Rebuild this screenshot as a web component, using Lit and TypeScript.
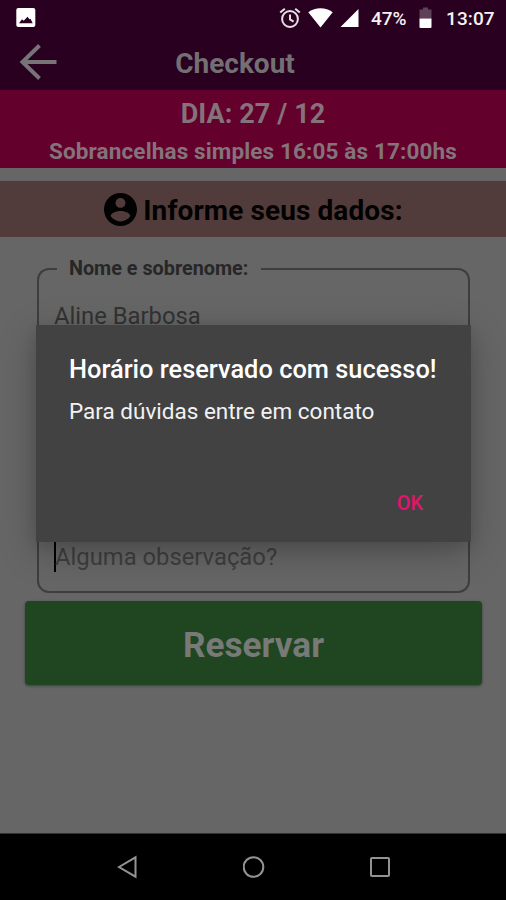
import { LitElement, html, css } from "lit";
import { customElement } from "lit/decorators.js";

@customElement("app-root")
export class AppRoot extends LitElement {
  static styles = css`
    :host {
      display: block;
      position: relative;
      width: 506px;
      height: 900px;
      overflow: hidden;
      background: #666666;
      font-family: Roboto, "Liberation Sans", sans-serif;
      line-height: 1;
      white-space: nowrap;
    }
    * { box-sizing: border-box; }
    svg { display: block; flex: none; }
    .screen { display: flex; flex-direction: column; height: 900px; }
    .status {
      height: 36px;
      background: #2a0020;
      color: #f4f2f4;
      display: flex;
      align-items: center;
      padding: 0 11px 0 15px;
      font-size: 19px;
      font-weight: 500;
    }
    .spacer { flex: 1; }
    .alarm { margin-right: 7px; }
    .wifi { margin-right: 7px; }
    .signal { margin-right: 12px; }
    .percent { width: 38px; margin-right: 10px; }
    .battery { margin-right: 14px; }
    .clock { width: 49px; letter-spacing: 0.1px; }
    .bar {
      height: 54px;
      background: #2a0020;
      color: #737073;
      display: grid;
      grid-template-columns: 60px 1fr 96px;
      align-items: center;
      font-size: 28px;
      font-weight: 700;
    }
    .bar svg { margin-left: 19px; margin-top: -2px; }
    .bar span { text-align: center; padding-top: 2px; }
    .day {
      height: 78px;
      background: #64002c;
      color: #84737b;
      display: flex;
      flex-direction: column;
      align-items: center;
      padding-top: 11px;
      font-weight: 700;
      gap: 12px;
    }
    .date { font-size: 27px; letter-spacing: 0.1px; }
    .service { font-size: 22.5px; letter-spacing: 0.13px; }
    .section {
      margin-top: 13px;
      height: 56px;
      background: #523c3b;
      color: #020202;
      display: flex;
      align-items: center;
      justify-content: center;
      gap: 6px;
      padding: 4px 0 0 1px;
      font-size: 28px;
      letter-spacing: 0.1px;
      font-weight: 700;
    }
    .section svg { margin-top: -4px; }
    .field {
      margin: 22px 36px 0 37px;
      height: 334px;
      display: flex;
      flex-direction: column;
    }
    .legend {
      display: flex;
      align-items: flex-start;
      height: 46px;
      color: #272727;
      font-size: 19.8px;
      font-weight: 700;
    }
    .edge { height: 37px; margin-top: 9px; border: 0 solid #3e3e3e; }
    .left { width: 20px; border-width: 2px 0 0 2px; border-top-left-radius: 12px; }
    .right { flex: 1; border-width: 2px 2px 0 0; border-top-right-radius: 12px; }
    .legend span { width: 204px; padding-left: 12px; }
    .body {
      flex: 1;
      border: 2px solid #3e3e3e;
      border-top: 0;
      border-radius: 0 0 12px 12px;
      display: flex;
      flex-direction: column;
      justify-content: space-between;
      padding: 0 15px 19px;
      font-size: 23.8px;
    }
    .name { color: #323232; }
    .note { color: #3e3e3e; display: flex; align-items: center; height: 30px; }
    .note span { padding-top: 2px; }
    .caret { width: 2px; height: 30px; background: #000; margin-right: -1px; }
    .reserve {
      margin: 8px 24px 0 25px;
      height: 84px;
      border-radius: 4px;
      background: #1f4621;
      box-shadow: 0 1px 3px rgba(0, 0, 0, 0.4);
      color: #777a77;
      display: flex;
      align-items: center;
      justify-content: center;
      padding-top: 6px;
      font-size: 35.2px;
      font-weight: 700;
    }
    .nav {
      margin-top: auto;
      height: 67px;
      background: #000;
      border-top: 1px solid #333;
      display: flex;
      align-items: center;
      justify-content: space-between;
      padding: 0 115px 0 116px;
    }
    .dialog {
      position: absolute;
      left: 36px;
      top: 325px;
      width: 435px;
      height: 217px;
      background: #424242;
      box-shadow: 0 10px 34px rgba(0, 0, 0, 0.26), 0 4px 12px rgba(0, 0, 0, 0.08);
      padding: 32px 34px 28px 33px;
      display: flex;
      flex-direction: column;
    }
    .title { color: #fff; font-size: 25.4px; font-weight: 500; }
    .message { color: #f2f2f2; font-size: 22.5px; margin-top: 18px; }
    .ok { color: #e3146c; font-size: 19.8px; font-weight: 500; margin-top: auto; align-self: flex-end; margin-right: 14px; }
  `;

  render() {
    return html`
      <div class="screen">
        <div class="status">
          <svg width="22" height="22" viewBox="0 0 22 22">
            <rect x="1.3" y="1" width="19" height="19" rx="2" fill="#fff" />
            <path d="M4 16.300l3-4 1.700 1.500 3.800-4 2 2.500 1-.5 2.200 4.500z" fill="#2a0020" />
          </svg>
          <div class="spacer"></div>
          <svg class="alarm" width="22" height="22" viewBox="0 0 22 22" fill="none" stroke="#e6e0e5" stroke-width="2">
            <circle cx="11" cy="12" r="7.9" />
            <path d="M1.2 5.6L5.8 1.7M16.2 1.7l4.6 3.9M11 7.5V12.4l3.6 2.2" />
          </svg>
          <svg class="wifi" width="25" height="22" viewBox="0 0 25 22">
            <path d="M0.3 5.2C7 -0.2 18 -0.2 24.7 5.2L12.5 20.6z" fill="#fff" />
          </svg>
          <svg class="signal" width="19" height="22" viewBox="0 0 19 22">
            <path d="M0.5 20L18.5 2V20z" fill="#fff" />
          </svg>
          <span class="percent">47%</span>
          <svg class="battery" width="13" height="22" viewBox="0 0 13 22">
            <path d="M4 0.5h5v2h3.5v9H0.5v-9H4z" fill="#5e4059" />
            <path d="M0.5 11.5h12V20q0 1-1 1h-10q-1 0-1-1z" fill="#fff" />
          </svg>
          <span class="clock">13:07</span>
        </div>
        <div class="bar">
          <svg width="38" height="36" viewBox="0 0 38 36" fill="none" stroke="#777477" stroke-width="4">
            <path d="M20.500 1.500L3.500 18L20.500 34.500M3.500 18H37.500" />
          </svg>
          <span>Checkout</span>
        </div>
        <div class="day">
          <div class="date">DIA: 27 / 12</div>
          <div class="service">Sobrancelhas simples 16:05 às 17:00hs</div>
        </div>
        <div class="section">
          <svg width="33" height="33" viewBox="2 2 20 20" fill="#020202">
            <path d="M12 2C6.48 2 2 6.48 2 12s4.48 10 10 10 10-4.48 10-10S17.520 2 12 2zm0 3c1.66 0 3 1.340 3 3s-1.340 3-3 3-3-1.340-3-3 1.340-3 3-3zm0 14.200c-2.500 0-4.710-1.280-6-3.220.030-1.990 4-3.080 6-3.080 1.990 0 5.970 1.090 6 3.080-1.290 1.940-3.500 3.220-6 3.220z" />
          </svg>
          <span>Informe seus dados:</span>
        </div>
        <div class="field">
          <div class="legend"><i class="edge left"></i><span>Nome e sobrenome:</span><i class="edge right"></i></div>
          <div class="body">
            <div class="name">Aline Barbosa</div>
            <div class="note"><i class="caret"></i><span>Alguma observação?</span></div>
          </div>
        </div>
        <div class="reserve">Reservar</div>
        <div class="nav">
          <svg width="22" height="24" viewBox="0 0 22 24" fill="none" stroke="#939393" stroke-width="2">
            <path d="M3 12L19.500 2.300V21.700z" />
          </svg>
          <svg width="22" height="24" viewBox="0 0 22 24" fill="none" stroke="#939393" stroke-width="2">
            <circle cx="10.500" cy="12" r="9.800" />
          </svg>
          <svg width="22" height="24" viewBox="0 0 22 24" fill="none" stroke="#939393" stroke-width="2">
            <rect x="2" y="3" width="18" height="18" rx="1" />
          </svg>
        </div>
      </div>
      <div class="dialog">
        <div class="title">Horário reservado com sucesso!</div>
        <div class="message">Para dúvidas entre em contato</div>
        <div class="ok">OK</div>
      </div>
    `;
  }
}
